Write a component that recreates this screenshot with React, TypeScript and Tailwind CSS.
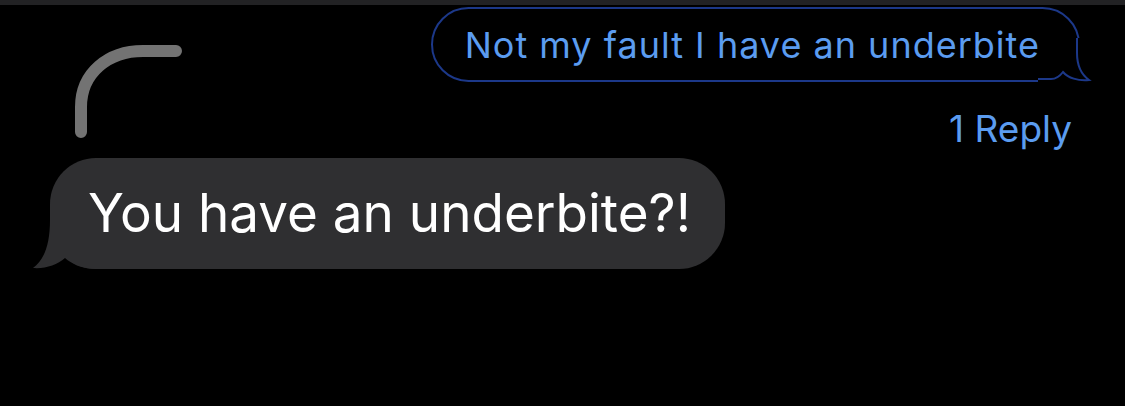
export default function App() {
  return (
    <div className="w-[1125px] h-[406px] bg-black overflow-hidden font-['Inter','Liberation_Sans',sans-serif]">
      <div className="h-[5px] bg-[#222224]" />
      <div className="flex justify-between">
        <div className="ml-[70px] mt-[35px]">
          <svg width="120" height="105" viewBox="0 0 120 105" fill="none">
            <path
              d="M11 92 V67 C11 33 38 11 73 11 H106"
              stroke="#737373"
              strokeWidth="12"
              strokeLinecap="round"
            />
          </svg>
        </div>
        <div className="flex flex-col items-end pr-[45px] pt-[2px]">
          <div className="relative flex h-[75px] items-center rounded-[38px] border-2 border-[#1c3889] pl-[32px] pr-[38px]">
            <span className="text-[36px] tracking-[1px] text-[#5b9cf0]">Not my fault I have an underbite</span>
            <svg className="absolute right-[-16px] bottom-[-4px]" width="56" height="46" viewBox="0 0 56 46" fill="none">
              <rect x="0" y="0" width="42" height="44" fill="#000" />
              <path
                d="M0 41 H13 C18 41 22 38 25 34 C30 40 40 43 51 42 C44 37 39 28 39 15 V0"
                stroke="#1c3889"
                strokeWidth="2"
              />
            </svg>
          </div>
          <div className="mt-[26px] mr-[8px] text-[37px] leading-[42px] text-[#5b9cf0]">1 Reply</div>
        </div>
      </div>
      <div className="mt-[8px] pl-[50px]">
        <div className="relative inline-flex h-[111px] items-center rounded-[46px] bg-[#2f2f31] pl-[38px] pr-[34px]">
          <span className="text-[53px] text-white">You have an underbite?!</span>
          <svg className="absolute left-[-20px] bottom-[-3px]" width="80" height="54" viewBox="0 0 80 54" fill="none">
            <path
              d="M20 2 C20 27 14 42 3 50 C15 51 27 47 35 40 C42 46 50 50 65 51 L65 2 Z"
              fill="#2f2f31"
            />
          </svg>
        </div>
      </div>
    </div>
  )
}
